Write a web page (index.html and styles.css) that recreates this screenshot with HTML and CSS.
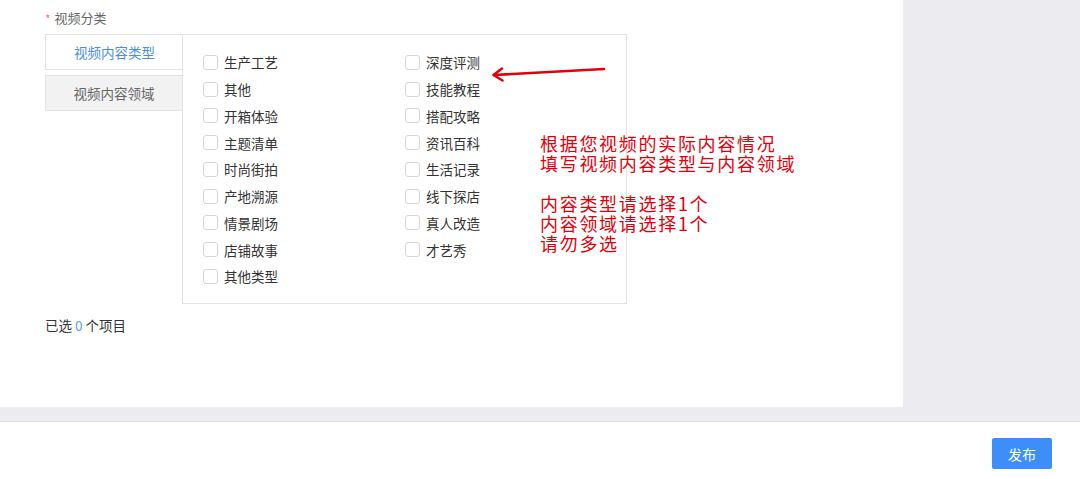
FILE: index.html
```html
<!DOCTYPE html>
<html lang="zh-CN">
<head>
<meta charset="utf-8">
<title>视频分类</title>
<link rel="stylesheet" href="styles.css">
</head>
<body>
<div class="page">
  <div class="main">
    <div class="content">
      <div class="field-label"><span class="star">*</span>视频分类</div>
      <div class="category">
        <div class="tabs">
          <div class="tab active">视频内容类型</div>
          <div class="tab">视频内容领域</div>
        </div>
        <div class="panel">
          <div class="grid">
            <label class="opt"><span class="box"></span>生产工艺</label>
            <label class="opt"><span class="box"></span>深度评测</label>
            <label class="opt"><span class="box"></span>其他</label>
            <label class="opt"><span class="box"></span>技能教程</label>
            <label class="opt"><span class="box"></span>开箱体验</label>
            <label class="opt"><span class="box"></span>搭配攻略</label>
            <label class="opt"><span class="box"></span>主题清单</label>
            <label class="opt"><span class="box"></span>资讯百科</label>
            <label class="opt"><span class="box"></span>时尚街拍</label>
            <label class="opt"><span class="box"></span>生活记录</label>
            <label class="opt"><span class="box"></span>产地溯源</label>
            <label class="opt"><span class="box"></span>线下探店</label>
            <label class="opt"><span class="box"></span>情景剧场</label>
            <label class="opt"><span class="box"></span>真人改造</label>
            <label class="opt"><span class="box"></span>店铺故事</label>
            <label class="opt"><span class="box"></span>才艺秀</label>
            <label class="opt"><span class="box"></span>其他类型</label>
          </div>
        </div>
      </div>
      <div class="selected">已选 <span class="num">0</span> 个项目</div>

      <svg class="arrow" width="130" height="24" viewBox="0 0 130 24">
        <path d="M117 7 L7 13" stroke="#e3000b" stroke-width="2.6" fill="none" stroke-linecap="round"/>
        <path d="M15 6.5 L6.5 13 L15.5 18.5" stroke="#e3000b" stroke-width="2.6" fill="none" stroke-linecap="round" stroke-linejoin="round"/>
      </svg>
      <div class="note">
        <div class="note-line">根据您视频的实际内容情况</div>
        <div class="note-line">填写视频内容类型与内容领域</div>
        <div class="note-gap"></div>
        <div class="note-line">内容类型请选择1个</div>
        <div class="note-line">内容领域请选择1个</div>
        <div class="note-line">请勿多选</div>
      </div>
    </div>
    <div class="side"></div>
  </div>
  <div class="band"></div>
  <div class="footer">
    <button class="publish">发布</button>
  </div>
</div>
</body>
</html>
```

FILE: styles.css
```css
* { box-sizing: border-box; }
html, body { margin: 0; padding: 0; }
body {
  width: 1080px;
  height: 479px;
  overflow: hidden;
  background: #fff;
  font-family: "Noto Sans CJK SC", "Noto Sans", sans-serif;
  color: #333;
}
.page { display: flex; flex-direction: column; height: 479px; }
.main { display: flex; height: 407px; }
.content {
  position: relative;
  width: 903px;
  background: #fff;
  padding: 8px 0 0 45px;
}
.side { flex: 1; background: #ebebf0; }
.band {
  height: 15px;
  background: #ebebf0;
  border-bottom: 1px solid #dcdce2;
}
.footer {
  flex: 1;
  background: #fff;
  display: flex;
  justify-content: flex-end;
  align-items: flex-start;
  padding: 16px 28px 0 0;
}
.publish {
  width: 60px;
  height: 31px;
  border: none;
  border-radius: 2px;
  background: #3d8ef8;
  color: #fff;
  font-family: inherit;
  font-size: 14px;
  padding: 0;
}
.field-label {
  font-size: 13px;
  line-height: 20px;
  height: 20px;
  color: #666;
  display: flex;
  align-items: center;
}
.star { color: #f0807f; font-size: 12px; margin-right: 4px; position: relative; top: 1px; }
.category { display: flex; margin-top: 6px; }
.tabs { display: flex; flex-direction: column; gap: 5px; width: 138px; }
.tab {
  height: 36px;
  border: 1px solid #e3e3e3;
  background: #f2f2f2;
  color: #666;
  font-size: 13.5px;
  display: flex;
  align-items: center;
  justify-content: center;
}
.tab.active { background: #fff; color: #4a90e2; border-right: none; }
.panel {
  width: 445px;
  height: 270px;
  margin-left: -1px;
  border: 1px solid #e3e3e3;
  background: #fff;
  padding: 14px 0 0 20px;
}
.grid {
  display: grid;
  grid-template-columns: 202px 202px;
  grid-auto-rows: 26.75px;
}
.opt {
  display: flex;
  align-items: center;
  gap: 6px;
  font-size: 13.5px;
  color: #333;
}
.box {
  width: 15px;
  height: 15px;
  border: 1px solid #d6d6d6;
  border-radius: 3px;
  background: #fff;
}
.selected {
  margin-top: 11px;
  font-size: 13.5px;
  line-height: 20px;
  color: #333;
}
.num { color: #5b9fe6; }
.arrow { position: absolute; left: 487px; top: 62px; }
.note {
  position: absolute;
  left: 540px;
  top: 133px;
  display: flex;
  flex-direction: column;
  color: #e3000b;
  font-size: 18px;
  letter-spacing: 1.7px;
}
.note-line { height: 20px; line-height: 20px; white-space: nowrap; }
.note-gap { height: 20px; }
```
